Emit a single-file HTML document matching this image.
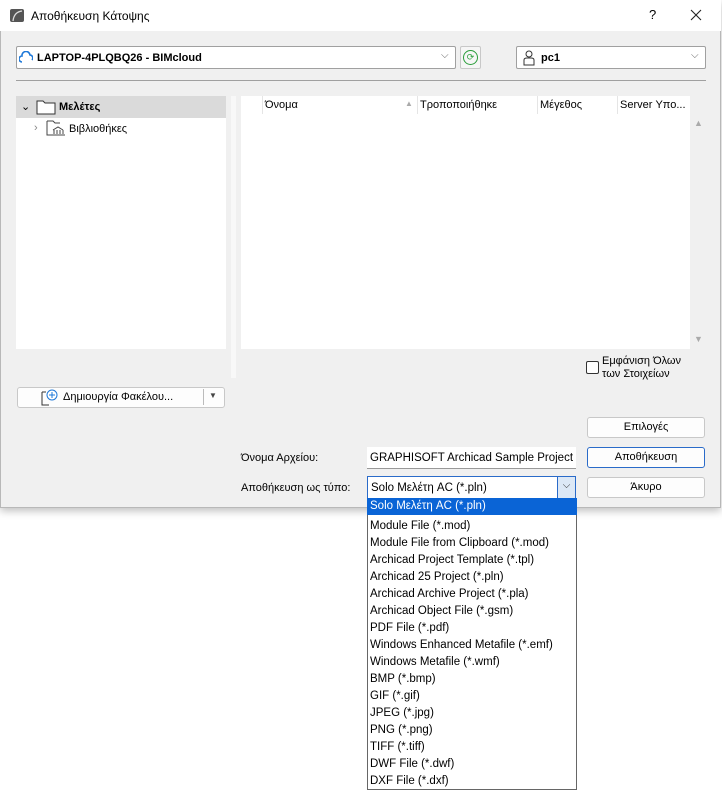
<!DOCTYPE html>
<html><head><meta charset="utf-8"><style>
*{box-sizing:border-box;margin:0;padding:0}
body{width:722px;height:788px;background:#fff;font-family:"Liberation Sans","DejaVu Sans",sans-serif;font-size:11px;color:#000;position:relative;overflow:hidden}
.a{position:absolute}
.dlg{left:0;top:0;width:721px;height:508px;background:#f0f0f0;border:1px solid #b8b8b8;box-shadow:0 3px 8px rgba(0,0,0,.25)}
.title{left:0;top:0;width:721px;height:31px;background:#fff}
.combo{background:#fff;border:1px solid #a0a0a0;border-radius:2px}
.btn{background:#fdfdfd;border:1px solid #c8c8c8;border-radius:3px;text-align:center;line-height:19px;font-size:11px}
</style></head><body>
<div class="a dlg"></div>
<div class="a title"></div>
<div class="a" style="left:10px;top:9px;width:14px;height:13px;background:#555;border-radius:2px"></div>
<svg class="a" style="left:10px;top:9px" width="14" height="13"><path d="M3 12 Q4 3 12 2" stroke="#ddd" stroke-width="1.3" fill="none"/></svg>
<div class="a" style="left:31px;top:9px;font-size:12px">Αποθήκευση Κάτοψης</div>
<div class="a" style="left:649px;top:7px;font-size:13px">?</div>
<svg class="a" style="left:690px;top:9px" width="12" height="12"><path d="M1 1 L11 11 M11 1 L1 11" stroke="#222" stroke-width="1.1"/></svg>

<div class="a combo" style="left:16px;top:46px;width:440px;height:23px"></div>
<svg class="a" style="left:19px;top:51px" width="14" height="12"><path d="M3 11 A3 3 0 0 1 3 5 A4 4 0 0 1 11 4 A3 3 0 0 1 13 9" stroke="#1e78d8" stroke-width="1.6" fill="none"/></svg>
<div class="a" style="left:37px;top:52px;font-weight:bold;font-size:11px">LAPTOP-4PLQBQ26 - BIMcloud</div>
<div class="a" style="left:441px;top:50px;color:#666;font-size:10px">⌵</div>
<div class="a" style="left:460px;top:46px;width:21px;height:23px;border:1px solid #c8c8c8;background:#f6f6f6;border-radius:2px"></div>
<div class="a" style="left:463px;top:50px;width:15px;height:15px;border-radius:50%;border:1.5px solid #2a9d3a;color:#2a9d3a;font-size:9px;text-align:center;line-height:12px">⟳</div>
<div class="a combo" style="left:516px;top:46px;width:190px;height:23px"></div>
<svg class="a" style="left:522px;top:49px" width="14" height="17"><circle cx="7" cy="5" r="3" stroke="#333" fill="none"/><path d="M2 16 V11 Q2 9 5 9 H9 Q12 9 12 11 V16 Z" stroke="#333" fill="none"/></svg>
<div class="a" style="left:541px;top:52px;font-weight:bold">pc1</div>
<div class="a" style="left:691px;top:50px;color:#666;font-size:10px">⌵</div>
<div class="a" style="left:16px;top:80px;width:690px;height:1px;background:#a0a0a0"></div>

<div class="a" style="left:16px;top:96px;width:210px;height:253px;background:#fff"></div>
<div class="a" style="left:16px;top:96px;width:210px;height:22px;background:#dadada"></div>
<div class="a" style="left:21px;top:100px;font-size:11px">⌄</div>
<svg class="a" style="left:36px;top:99px" width="20" height="16"><path d="M1 2 H7 L9 4 H19 V15 H1 Z" stroke="#333" fill="#fff"/></svg>
<div class="a" style="left:59px;top:101px;font-weight:bold">Μελέτες</div>
<div class="a" style="left:34px;top:122px;color:#888">›</div>
<svg class="a" style="left:46px;top:119px" width="20" height="17"><path d="M1 2 H7 L9 4 H14 M1 2 V16 H6" stroke="#444" fill="none"/><path d="M7 11 L12 8 L17 11 M8 11 V15 M11 11 V15 M14 11 V15 M17 11 V15 M6 16 H19" stroke="#444" fill="none"/></svg>
<div class="a" style="left:69px;top:123px">Βιβλιοθήκες</div>
<div class="a" style="left:231px;top:96px;width:5px;height:282px;background:#f8f8f8"></div>

<div class="a" style="left:241px;top:96px;width:449px;height:253px;background:#fff"></div>
<div class="a" style="left:262px;top:96px;width:1px;height:18px;background:#e5e5e5"></div>
<div class="a" style="left:417px;top:96px;width:1px;height:18px;background:#e5e5e5"></div>
<div class="a" style="left:537px;top:96px;width:1px;height:18px;background:#e5e5e5"></div>
<div class="a" style="left:617px;top:96px;width:1px;height:18px;background:#e5e5e5"></div>
<div class="a" style="left:265px;top:99px">Όνομα</div>
<div class="a" style="left:405px;top:99px;color:#aaa;font-size:8px">▲</div>
<div class="a" style="left:420px;top:99px">Τροποποιήθηκε</div>
<div class="a" style="left:540px;top:99px">Μέγεθος</div>
<div class="a" style="left:620px;top:99px">Server Υπο...</div>
<div class="a" style="left:694px;top:118px;color:#aaa;font-size:9px">▲</div>
<div class="a" style="left:694px;top:334px;color:#aaa;font-size:9px">▼</div>

<div class="a" style="left:586px;top:361px;width:13px;height:13px;border:1px solid #333;border-radius:2px;background:#fff"></div>
<div class="a" style="left:602px;top:355px;line-height:13px">Εμφάνιση Όλων<br>των Στοιχείων</div>

<div class="a btn" style="left:17px;top:387px;width:208px;height:21px"></div>
<svg class="a" style="left:41px;top:389px" width="18" height="17"><path d="M1 3 V16 H8 M1 3 H5" stroke="#333" fill="none"/><circle cx="11" cy="6" r="5" stroke="#1e78d8" fill="#fff"/><path d="M11 3 V9 M8 6 H14" stroke="#1e78d8"/></svg>
<div class="a" style="left:63px;top:391px">Δημιουργία Φακέλου...</div>
<div class="a" style="left:203px;top:389px;width:1px;height:16px;background:#bbb"></div>
<div class="a" style="left:209px;top:391px;font-size:8px;color:#444">▼</div>

<div class="a btn" style="left:587px;top:417px;width:118px;height:21px">Επιλογές</div>
<div class="a btn" style="left:587px;top:447px;width:118px;height:21px;border-color:#2a6bc9">Αποθήκευση</div>
<div class="a btn" style="left:587px;top:477px;width:118px;height:21px">Άκυρο</div>

<div class="a" style="left:241px;top:452px">Όνομα Αρχείου:</div>
<div class="a" style="left:367px;top:447px;width:209px;height:22px;background:#fff;border-bottom:1px solid #999;overflow:hidden;white-space:nowrap;padding:5px 3px;font-size:11.5px">GRAPHISOFT Archicad Sample Project H</div>
<div class="a" style="left:241px;top:482px">Αποθήκευση ως τύπο:</div>
<div class="a" style="left:367px;top:476px;width:209px;height:23px;background:#fff;border:1px solid #2a6bc9;padding:5px 3px;font-size:11.5px">Solo Μελέτη AC (*.pln)</div>
<div class="a" style="left:557px;top:477px;width:18px;height:21px;background:#dce8f6;border-left:1px solid #2a6bc9;text-align:center;color:#333;font-size:10px;line-height:17px">⌵</div>

<div class="a" style="left:367px;top:498px;width:210px;height:292px;background:#fff;border:1px solid #666"></div>
<div class="a" style="left:367px;top:498px;width:210px;height:17px;background:#0a64d6"></div>
<div class="a" style="left:370px;top:500px;color:#fff;font-size:11.5px">Solo Μελέτη AC (*.pln)</div>
<div class="a" style="left:367px;top:518px;font-size:11.5px;line-height:17px;padding-left:3px">
Module File (*.mod)<br>Module File from Clipboard (*.mod)<br>Archicad Project Template (*.tpl)<br>Archicad 25 Project (*.pln)<br>Archicad Archive Project (*.pla)<br>Archicad Object File (*.gsm)<br>PDF File (*.pdf)<br>Windows Enhanced Metafile (*.emf)<br>Windows Metafile (*.wmf)<br>BMP (*.bmp)<br>GIF (*.gif)<br>JPEG (*.jpg)<br>PNG (*.png)<br>TIFF (*.tiff)<br>DWF File (*.dwf)<br>DXF File (*.dxf)</div>
</body></html>
